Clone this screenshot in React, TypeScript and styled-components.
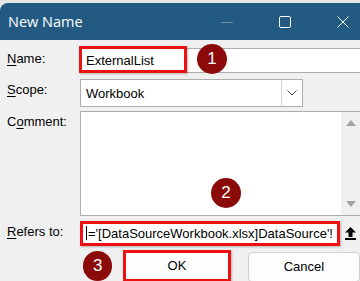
import React from 'react';
import styled, { createGlobalStyle } from 'styled-components';

const GlobalStyle = createGlobalStyle`
  html, body {
    margin: 0;
    padding: 0;
    background: #f0f0f0;
  }
  * {
    box-sizing: border-box;
  }
`;

const App = () => {
  return (
    <Window>
      <GlobalStyle />
      <Top>
        <TitleBar>
          <Title>New Name</Title>
          <Controls>
            <ControlBtn>
              <svg width="12" height="12" viewBox="0 0 12 12">
                <line x1="0" y1="6.5" x2="12" y2="6.5" stroke="#6f8fab" strokeWidth="1" />
              </svg>
            </ControlBtn>
            <ControlBtn>
              <svg width="12" height="12" viewBox="0 0 12 12">
                <rect x="0.5" y="0.5" width="11" height="11" rx="1.5" fill="none" stroke="#fff" strokeWidth="1" />
              </svg>
            </ControlBtn>
            <ControlBtn>
              <svg width="12" height="12" viewBox="0 0 12 12">
                <path d="M0.5 0.5 L11.5 11.5 M11.5 0.5 L0.5 11.5" stroke="#fff" strokeWidth="1" />
              </svg>
            </ControlBtn>
          </Controls>
        </TitleBar>
      </Top>

      <Body>
        <Row>
          <Label>
            <u>N</u>ame:
          </Label>
          <Field>
            <TextInput>ExternalList</TextInput>
            <Highlight style={{ left: -1, top: -2, width: 108, height: 27 }} />
            <Badge style={{ left: 117, top: -4 }}>1</Badge>
          </Field>
        </Row>

        <Row $gap={6}>
          <Label>
            <u>S</u>cope:
          </Label>
          <Field>
            <Select>
              <SelectText>Workbook</SelectText>
              <DropBtn>
                <svg width="10" height="6" viewBox="0 0 10 6">
                  <path d="M0.5 0.5 L5 5 L9.5 0.5" fill="none" stroke="#444" strokeWidth="1" />
                </svg>
              </DropBtn>
            </Select>
          </Field>
        </Row>

        <Row $gap={4}>
          <Label>
            C<u>o</u>mment:
          </Label>
          <Field>
            <TextArea>
              <ScrollBar>
                <Arrow $up />
                <Arrow />
              </ScrollBar>
            </TextArea>
            <Badge style={{ left: 131, top: 67 }}>2</Badge>
          </Field>
        </Row>

        <Row $gap={5}>
          <Label>
            <u>R</u>efers to:
          </Label>
          <Field>
            <RefRow>
              <RefInput>='[DataSourceWorkbook.xlsx]DataSource'!</RefInput>
              <CollapseBtn>
                <svg width="11" height="13" viewBox="0 0 11 13">
                  <path d="M5.5 0 L11 5.5 L7.5 5.5 L7.5 10 L3.5 10 L3.5 5.5 L0 5.5 Z" fill="#000" />
                  <rect x="0" y="11" width="11" height="2" fill="#000" />
                </svg>
              </CollapseBtn>
            </RefRow>
          </Field>
        </Row>

        <ButtonRow>
          <Badge $static>3</Badge>
          <OkButton>OK</OkButton>
          <CancelButton>Cancel</CancelButton>
        </ButtonRow>
      </Body>
    </Window>
  );
};

export default App;

const Window = styled.div`
  width: 360px;
  height: 281px;
  overflow: hidden;
  background: #f0f0f0;
  font-family: 'Liberation Sans', Arial, sans-serif;
  color: #000;
`;

// strip of the spreadsheet behind the dialog
const Top = styled.div`
  padding-top: 3px;
  background: #e6e6e6;
`;

const TitleBar = styled.div`
  height: 37px;
  background: #235a81;
  border-top-left-radius: 8px;
  display: flex;
  align-items: center;
`;

const Title = styled.div`
  padding-left: 8px;
  font-family: 'Open Sans', 'Liberation Sans', sans-serif;
  font-size: 14.5px;
  color: #fff;
  flex: 1;
`;

const Controls = styled.div`
  display: flex;
  align-items: center;
  padding-right: 11px;
  gap: 46px;
`;

const ControlBtn = styled.div`
  width: 12px;
  height: 12px;
  display: flex;
`;

const Body = styled.div`
  padding-top: 8px;
  display: flex;
  flex-direction: column;
`;

const Row = styled.div<{ $gap?: number }>`
  display: flex;
  margin-top: ${(p) => p.$gap ?? 0}px;
`;

const Label = styled.div`
  width: 80px;
  flex-shrink: 0;
  padding: 3px 0 0 7px;
  font-size: 13px;
  line-height: 16px;
  u {
    text-decoration-thickness: 1px;
    text-underline-offset: 2px;
  }
`;

const Field = styled.div`
  position: relative;
  flex: 1;
`;

const TextInput = styled.div`
  height: 25px;
  width: 290px;
  background: #fff;
  border: 1px solid #adadad;
  padding: 3px 0 0 5px;
  font-size: 13px;
  line-height: 17px;
`;

const Highlight = styled.div`
  position: absolute;
  border: 3px solid #ee1111;
  box-shadow: 1px 1px 2px rgba(0, 0, 0, 0.25);
  pointer-events: none;
`;

const Badge = styled.div<{ $static?: boolean }>`
  position: ${(p) => (p.$static ? 'static' : 'absolute')};
  width: 30px;
  height: 30px;
  border-radius: 50%;
  background: #8b0a0a;
  color: #fff;
  font-size: 17px;
  display: flex;
  align-items: center;
  justify-content: center;
`;

const Select = styled.div`
  height: 28px;
  width: 223px;
  background: #fff;
  border: 1px solid #adadad;
  display: flex;
  align-items: stretch;
`;

const SelectText = styled.div`
  flex: 1;
  padding: 5px 0 0 5px;
  font-size: 13px;
  line-height: 17px;
`;

const DropBtn = styled.div`
  width: 21px;
  border-left: 1px solid #d6d6d6;
  display: flex;
  align-items: center;
  justify-content: center;
`;

const TextArea = styled.div`
  height: 105px;
  width: 290px;
  background: #fff;
  border: 1px solid #adadad;
  display: flex;
  justify-content: flex-end;
`;

const ScrollBar = styled.div`
  width: 19px;
  margin-right: 9px;
  background: #f0f0f0;
  display: flex;
  flex-direction: column;
  justify-content: space-between;
  align-items: center;
  padding: 8px 0 8px;
`;

const Arrow = styled.div<{ $up?: boolean }>`
  width: 0;
  height: 0;
  border-left: 5px solid transparent;
  border-right: 5px solid transparent;
  ${(p) =>
    p.$up ? 'border-bottom: 6px solid #a3a3a3;' : 'border-top: 6px solid #a3a3a3;'}
`;

const RefRow = styled.div`
  display: flex;
  align-items: center;
`;

const RefInput = styled.div`
  height: 25px;
  width: 260px;
  background: #fff;
  border: 3px solid #ee1111;
  box-shadow: 1px 1px 2px rgba(0, 0, 0, 0.25);
  padding: 1px 0 0 3px;
  font-size: 13px;
  line-height: 17px;
  white-space: nowrap;
  overflow: hidden;
  &::before {
    content: '';
    display: inline-block;
    width: 1px;
    height: 14px;
    background: #000;
    vertical-align: -2px;
    margin-right: 1px;
  }
`;

const CollapseBtn = styled.div`
  margin-left: 5px;
  display: flex;
`;

const ButtonRow = styled.div`
  display: flex;
  align-items: flex-start;
  margin-top: 5px;
  padding-left: 83px;
`;

const OkButton = styled.div`
  width: 110px;
  height: 32px;
  margin-left: 11px;
  margin-top: -1px;
  background: #fdfdfd;
  border: 3px solid #ee1111;
  box-shadow: 1px 1px 2px rgba(0, 0, 0, 0.25);
  font-size: 13px;
  display: flex;
  align-items: center;
  justify-content: center;
  padding-bottom: 2px;
`;

const CancelButton = styled.div`
  width: 115px;
  height: 30px;
  margin-left: 17px;
  margin-top: 1px;
  background: #fdfdfd;
  border: 1px solid #d0d0d0;
  border-radius: 4px;
  font-size: 13px;
  display: flex;
  align-items: center;
  justify-content: center;
  padding-bottom: 2px;
`;
